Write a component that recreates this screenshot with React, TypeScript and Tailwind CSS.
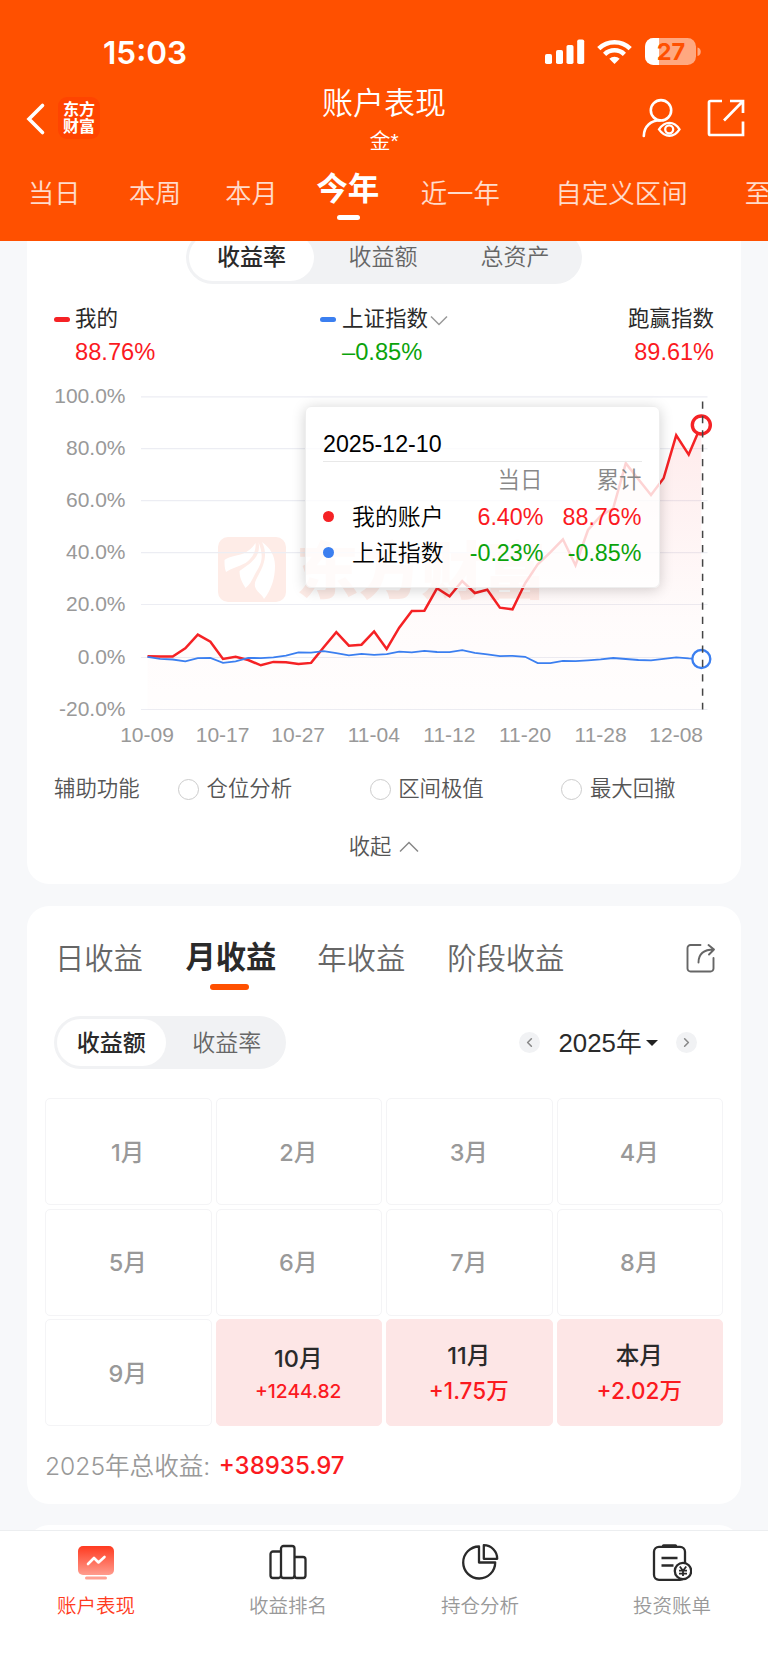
import { ChevronLeft, ChevronRight } from "lucide-react";
import clsx from "clsx";

const STEP = 12.587;
const START_X = 147.5;

// one value per trading day, in chart pixels
const mine = [
  656.3, 656.5, 656.5, 648.3, 634.6, 641.7, 659, 656.7, 660, 665.3, 661.9, 662.2, 664, 662.9, 647.3,
  632.2, 645.7, 644.7, 631.5, 649, 627.7, 611, 610.7, 588.3, 596.3, 581, 593, 589.7, 607.7, 609.3,
  583.3, 564.3, 552.3, 539.3, 565.3, 530, 516, 508.3, 463.2, 479.3, 495, 478.3, 435.3, 454.6, 425,
];
const index = [
  656.9, 658.8, 659.5, 661.3, 658.2, 658, 662.8, 661.3, 657.9, 658.1, 657.4, 655.6, 652.4, 652.7, 651.2,
  653.2, 655.3, 653.9, 654.8, 654.2, 651.7, 652.3, 650.9, 652, 652.1, 650.2, 652.8, 654.3, 656.2, 655.8,
  656.8, 663.1, 663.1, 660.8, 661.2, 660.4, 659.4, 658, 659, 660, 660.4, 658.8, 657.3, 658.3, 659,
];

const toPoints = (values: number[]) =>
  values.map((y, i) => `${(START_X + i * STEP).toFixed(1)},${y}`).join(" ");

const yTicks = [
  { label: "100.0%", y: 396.8 },
  { label: "80.0%", y: 448.7 },
  { label: "60.0%", y: 500.6 },
  { label: "40.0%", y: 552.6 },
  { label: "20.0%", y: 604.5 },
  { label: "0.0%", y: 657.5 },
  { label: "-20.0%", y: 709.5 },
];
const xTicks = ["10-09", "10-17", "10-27", "11-04", "11-12", "11-20", "11-28", "12-08"];

const months = [
  { name: "1月" },
  { name: "2月" },
  { name: "3月" },
  { name: "4月" },
  { name: "5月" },
  { name: "6月" },
  { name: "7月" },
  { name: "8月" },
  { name: "9月" },
  { name: "10月", value: "+1244.82", small: true },
  { name: "11月", value: "+1.75万" },
  { name: "本月", value: "+2.02万" },
];

function StatusBar() {
  return (
    <div className="flex h-[84px] items-center pt-[20px] text-white">
      <span className="mt-[2px] ml-[103px] w-[442px] font-['Inter'] text-[31.5px] leading-none font-semibold">15:03</span>
      <svg width="160" height="28" viewBox="545 38 160 28" fill="#fff">
        <rect x="545" y="54" width="7" height="10" rx="1.8" />
        <rect x="556" y="50" width="7" height="14" rx="1.8" />
        <rect x="566.5" y="45" width="7" height="19" rx="1.8" />
        <rect x="577.2" y="39.5" width="7" height="24.5" rx="1.8" />
        <g fill="none" stroke="#fff" strokeWidth="4.6">
          <path d="M598.8 48.6a22.5 22.5 0 0 1 31.4 0" />
          <path d="M604.6 54.3a14.3 14.3 0 0 1 19.8 0" />
        </g>
        <path d="M614.5 64l-5.2-5.3a7.6 7.6 0 0 1 10.4 0z" />
        <rect x="645" y="38" width="51" height="27" rx="8.5" fillOpacity="0.5" />
        <path d="M653.5 38H659V65H653.5A8.5 8.5 0 0 1 645 56.5V46.5A8.5 8.5 0 0 1 653.5 38z" />
        <path d="M697.5 47.5a4.4 4.4 0 0 1 0 8.5z" fillOpacity="0.5" />
        <text x="671" y="60.2" textAnchor="middle" fontSize="23.5" fontWeight="700" fill="#ff5000" className="font-['Inter']">27</text>
      </svg>
    </div>
  );
}

function Header() {
  return (
    <header className="relative z-10 h-[241px] shrink-0 overflow-hidden bg-[#ff5000] text-white">
      <StatusBar />
      <div className="flex h-[74px]">
        <div className="flex w-[254px] pl-[26px]">
          <svg className="mt-[18px]" width="20" height="34" viewBox="0 0 20 34" fill="none" stroke="#fff" strokeWidth="3.6" strokeLinecap="round">
            <path d="M16.5 3.5L3 17l13.5 13.5" strokeLinejoin="miter" />
          </svg>
          <div className="mt-[13px] ml-[12px] flex size-[42px] flex-col items-center justify-center rounded-[9px] bg-[#ff4400] text-[16px] leading-[17.5px] font-bold">
            <span>东方</span>
            <span>财富</span>
          </div>
        </div>
        <div className="flex w-[260px] flex-col items-center">
          <h1 className="mt-px text-[31px] leading-[38px] font-[350]">账户表现</h1>
          <p className="text-[21px] leading-[36px] font-[350]">金*</p>
        </div>
        <div className="flex flex-1 pl-[126px]">
          <svg width="110" height="50" viewBox="640 94 110 50" className="mt-[10px] shrink-0" fill="none" stroke="#fff" strokeWidth="2.6" strokeLinecap="round">
            <circle cx="661" cy="110.3" r="10.2" />
            <path d="M643.8 136c.3-10 7-15.5 16.5-15.7" />
            <path d="M659 129.3c6-8.6 15-8.6 20.5 0-5.5 8.6-14.5 8.6-20.5 0z" strokeWidth="2.3" />
            <circle cx="669.2" cy="129.3" r="4" strokeWidth="2.3" />
            <path d="M722 101h-11.5a1.5 1.5 0 0 0-1.5 1.5V133.5a1.5 1.5 0 0 0 1.5 1.5H743V121.5M743 113V101H730M743 101L724 120.5" strokeLinecap="butt" strokeWidth="2.7" />
          </svg>
        </div>
      </div>
      <nav className="flex h-[70px] items-center pt-[2px] pl-[28px] text-[26.2px] leading-none font-[350] whitespace-nowrap text-white/80">
        <span>当日</span>
        <span className="ml-[48.5px]">本周</span>
        <span className="ml-[44px]">本月</span>
        <span className="relative -mt-[9px] ml-[38.5px] text-[31.5px] font-bold text-white">
          今年
          <i className="absolute top-[41px] left-[20.5px] h-[5.5px] w-[23px] rounded-full bg-white" />
        </span>
        <span className="ml-[41.5px] text-[26.4px]">近一年</span>
        <span className="ml-[55.5px] text-[26.5px]">自定义区间</span>
        <span className="ml-[57px]">至</span>
      </nav>
    </header>
  );
}

function Tooltip() {
  const rows = [
    { name: "我的账户", dot: "bg-[#f52225]", day: "6.40%", total: "88.76%", color: "text-[#fb1a1f]" },
    { name: "上证指数", dot: "bg-[#3b7ff0]", day: "-0.23%", total: "-0.85%", color: "text-[#0ba30b]" },
  ];
  return (
    <div className="absolute top-[39px] left-[278px] h-[181.5px] w-[355px] rounded-[6px] border-[1.5px] border-[#eee] bg-white/80 pt-[19px] pr-[17.5px] pl-[17px] text-[23px] shadow-[0_2px_14px_rgba(0,0,0,0.18)]">
      <p className="h-[36px] border-b-[1.5px] border-[#e8e8e8] text-[23.2px] leading-[37px] text-black">2025-12-10</p>
      <div className="flex h-[38px] items-center justify-end text-[22.5px] leading-none font-[350] text-[#888]">
        <span className="mt-px">当日</span>
        <span className="mt-px ml-[54px]">累计</span>
      </div>
      {rows.map((row) => (
        <div key={row.name} className="flex h-[35.5px] items-center leading-none text-black">
          <i className={clsx("-mt-[2px] size-[11px] rounded-full", row.dot)} />
          <span className="ml-[18px] text-[22.9px] font-[350]">{row.name}</span>
          <span className={clsx("flex-1 text-right text-[23.3px]", row.color)}>{row.day}</span>
          <span className={clsx("w-[98px] text-right text-[23.3px]", row.color)}>{row.total}</span>
        </div>
      ))}
    </div>
  );
}

function Chart() {
  const endX = START_X + 44 * STEP;
  return (
    <div className="relative">
      <svg width="714" height="385" viewBox="27 367 714 385" className="block">
        <defs>
          <linearGradient id="area" x1="0" y1="0" x2="0" y2="1">
            <stop offset="0" stopColor="#f52225" stopOpacity="0.09" />
            <stop offset="0.7" stopColor="#f52225" stopOpacity="0.016" />
            <stop offset="1" stopColor="#f52225" stopOpacity="0.008" />
          </linearGradient>
        </defs>
        <g>
          <rect x="218" y="537" width="68" height="65" rx="10" fill="#feece7" />
          <g fill="#fff">
            <path d="M224.5 560c4-3 8-3.500 14-5 8-2 13-6 17-12 1 9-4 16-10 20-7 4-14 5-19.500 9-1.500-4-1.500-8-1.500-12z" />
            <path d="M258.500 542c3 14-7 21-19 29 0 7 3 12 6 17 4-3 6-7 9-13 5-9 11-15 4-33z" />
            <path d="M262 542c6 12 2 23-3 32-3 6-6 10-3 15 2 4 6 5 8 10 8-10 11-22 11-33 0-11-5-18-13-24z" />
          </g>
          <text x="296" y="593.5" fontSize="62.5" fontWeight="900" fill="#feece7">东方财富</text>
        </g>
        {yTicks.map((t) => (
          <g key={t.label}>
            <line x1="141" x2="707.5" y1={t.y} y2={t.y} stroke="#ecedf3" strokeWidth="1.2" />
            <text x="125.5" y={t.y + 6.3} textAnchor="end" fontSize="21" fill="#999">{t.label}</text>
          </g>
        ))}
        {xTicks.map((label, i) => (
          <text key={label} x={147 + i * 75.6} y="741.5" textAnchor="middle" fontSize="21" fill="#999">{label}</text>
        ))}
        <polygon points={`${START_X},709.5 ${toPoints(mine)} ${endX},709.5`} fill="url(#area)" />
        <polyline points={toPoints(mine)} fill="none" stroke="#f52225" strokeWidth="2.5" />
        <polyline points={toPoints(index)} fill="none" stroke="#3b7ff0" strokeWidth="1.8" />
        <circle cx={endX} cy="425" r="9" fill="#fff" stroke="#f52225" strokeWidth="3.4" />
        <circle cx={endX} cy="659" r="9" fill="#fff" stroke="#3b7ff0" strokeWidth="2.3" />
        <line x1="702.6" x2="702.6" y1="401.5" y2="709.5" stroke="#444" strokeWidth="1.5" strokeDasharray="7.3 7.05" />
      </svg>
      <Tooltip />
    </div>
  );
}

function PerformanceCard() {
  return (
    <section className="-mt-[10px] h-[653px] shrink-0 rounded-b-[22px] bg-white">
      <div className="mx-auto flex h-[53px] w-[396px] rounded-full bg-[#f1f2f4] p-[3px] text-[23px] leading-[46px] text-[#666]">
        <span className="h-[47px] w-[125px] rounded-full bg-white text-center font-medium text-[#2a2a2a]">收益率</span>
        <span className="ml-[6px] w-[126px] text-center font-[350]">收益额</span>
        <span className="ml-[6px] w-[126px] text-center font-[350]">总资产</span>
      </div>

      <div className="mt-[19px] flex justify-between pr-[27px] pl-[27px] text-[21.5px] leading-[32px] text-[#2a2a2a]">
        <div className="w-[266px]">
          <div className="flex items-center">
            <i className="mt-px mr-[5px] h-[5.5px] w-[16px] rounded-full bg-[#f52225]" />
            我的
          </div>
          <div className="mt-px pl-[21px] text-[23.7px] text-[#fb1a1f]">88.76%</div>
        </div>
        <div className="flex-1">
          <div className="flex items-center">
            <i className="mt-px mr-[6px] h-[5.5px] w-[16px] rounded-full bg-[#3b7ff0]" />
            上证指数
            <svg className="mt-[4px] ml-[2px]" width="18" height="12" viewBox="0 0 18 12" fill="none" stroke="#999" strokeWidth="1.5">
              <path d="M1 1.5l8 8 8-8" />
            </svg>
          </div>
          <div className="mt-px pl-[22px] text-[23.7px] text-[#0ba30b]">–0.85%</div>
        </div>
        <div className="text-right">
          <div>跑赢指数</div>
          <div className="mt-px text-[23.5px] text-[#fb1a1f]">89.61%</div>
        </div>
      </div>

      <div className="-mt-px">
        <Chart />
      </div>

      <div className="mt-[17px] flex h-[40px] items-center pl-[27px] text-[21.4px] leading-none font-[350] text-[#555]">
        <span className="mt-[2px] w-[124px] shrink-0">辅助功能</span>
        {["仓位分析", "区间极值", "最大回撤"].map((name) => (
          <span key={name} className="flex w-[191.7px] shrink-0 items-center">
            <i className="mr-[7.5px] size-[21px] shrink-0 rounded-full border-[1.5px] border-[#ccc]" />
            <span className="mt-[2px]">{name}</span>
          </span>
        ))}
      </div>
      <div className="mt-[18px] flex h-[40px] items-center justify-center text-[21.3px] leading-none font-[350] text-[#555]">
        <span className="mt-[2px]">收起</span>
        <svg className="ml-[8px]" width="20" height="12" viewBox="0 0 20 12" fill="none" stroke="#888" strokeWidth="1.5">
          <path d="M1 10.5l9-9 9 9" />
        </svg>
      </div>
    </section>
  );
}

function MonthlyCard() {
  return (
    <section className="mt-[21.5px] h-[598.5px] shrink-0 rounded-[22px] bg-white pt-[28px]">
      <div className="flex h-[50px] items-center pr-[25px] pl-[28px] text-[29.3px] leading-none font-[350] text-[#666]">
        <span>日收益</span>
        <span className="relative ml-[42.5px] text-[30.3px] font-bold text-[#2a2a2a]">
          月收益
          <i className="absolute top-[41px] left-[25px] h-[6px] w-[39px] rounded-full bg-[#ff5000]" />
        </span>
        <span className="ml-[41px]">年收益</span>
        <span className="ml-[42px]">阶段收益</span>
        <svg className="-mt-[2px] ml-auto" width="31" height="31" viewBox="0 0 31 31" fill="none" stroke="#666" strokeWidth="1.9" strokeLinecap="round" strokeLinejoin="round">
          <path d="M15.500 3H5.500A3 3 0 0 0 2.500 6V26.500a3 3 0 0 0 3 3H25.500A3 3 0 0 0 28.500 26.500V16" />
          <path d="M13.500 20.500C13.500 12 18 7.500 29 7.500M23.500 3L29 7.500l-5 5" />
        </svg>
      </div>

      <div className="mt-[32.5px] flex h-[53px] items-center pl-[27px]">
        <div className="flex h-[53px] w-[232px] rounded-full bg-[#f1f2f4] p-[3px] text-[23px] leading-[48px] text-[#666]">
          <span className="h-[47px] w-[109px] rounded-full bg-white text-center font-medium text-[#2a2a2a]">收益额</span>
          <span className="ml-[5px] w-[113px] text-center font-[350]">收益率</span>
        </div>
        <span className="ml-[232.5px] flex size-[21px] items-center justify-center rounded-full bg-[#f1f2f4]">
          <ChevronLeft size={15} color="#888" strokeWidth={2.5} />
        </span>
        <span className="mt-[2px] ml-[19px] w-[87px] text-[25.8px] leading-none font-[350] whitespace-nowrap text-[#2a2a2a]">2025年</span>
        <i className="border-x-[6px] border-t-[6px] border-x-transparent border-t-[#222]" />
        <span className="ml-[18px] flex size-[21px] items-center justify-center rounded-full bg-[#f1f2f4]">
          <ChevronRight size={15} color="#888" strokeWidth={2.5} />
        </span>
      </div>

      <div className="mx-[18px] mt-[29px] grid grid-cols-4 gap-x-[4px] gap-y-[3.7px] font-['Inter','Noto_Sans_CJK_SC',sans-serif]">
        {months.map((m) => (
          <div
            key={m.name}
            className={clsx(
              "flex h-[107px] flex-col items-center justify-center rounded-[5px] border pt-[2px] pr-px text-[23.5px] leading-[34px] font-medium",
              m.value ? "border-[#fde6e6] bg-[#fde6e6] text-[#2a2a2a]" : "border-[#f4f4f6] text-[#999]"
            )}
          >
            <span>{m.name}</span>
            {m.value && (
              <span className={clsx("text-[#fb1a1f]", m.small ? "text-[19.3px] leading-[30px]" : "text-[22.5px] leading-[35px]")}>
                {m.value}
              </span>
            )}
          </div>
        ))}
      </div>

      <p className="mt-[20px] ml-[18px] flex h-[40px] items-center font-['Inter','Noto_Sans_CJK_SC',sans-serif] text-[24.6px] leading-none font-[350] text-[#999]">
        2025年总收益:
        <span className="ml-[8.5px] text-[24px] font-medium text-[#fb1a1f]">+38935.97</span>
      </p>
    </section>
  );
}

function TabBar() {
  return (
    <nav className="relative z-10 grid h-[135px] shrink-0 grid-cols-4 border-t border-[#eceef0] bg-white text-[19.5px] leading-none font-[350] text-[#999]">
      <div className="flex flex-col items-center pt-[12px] text-[#ff3a20]">
        <svg width="40" height="40" viewBox="0 0 40 40">
          <defs>
            <linearGradient id="screen" x1="0" y1="0" x2="0" y2="1">
              <stop offset="0" stopColor="#ff3a20" />
              <stop offset="1" stopColor="#ff9c8e" />
            </linearGradient>
          </defs>
          <rect x="2" y="3" width="36" height="29" rx="5" fill="url(#screen)" />
          <rect x="9" y="33.5" width="22" height="3" rx="1.5" fill="#ffa093" />
          <path d="M12 21l6-6 4.5 4.500 6-5.500" fill="none" stroke="#fff" strokeWidth="2.6" strokeLinecap="round" strokeLinejoin="round" />
        </svg>
        <span className="mt-[14px]">账户表现</span>
      </div>
      <div className="flex flex-col items-center pt-[12px]">
        <svg width="40" height="40" viewBox="0 0 40 40" fill="none" stroke="#2a2a2a" strokeWidth="2.3">
          <path d="M13 8.500H5a2.500 2.500 0 0 0-2.500 2.500V32.500A2.500 2.500 0 0 0 5 35H10.500A2.500 2.500 0 0 0 13 32.500" />
          <rect x="13" y="3" width="13.5" height="32" rx="2.5" />
          <path d="M26.500 14h8.500a2.500 2.500 0 0 1 2.500 2.500V32.500A2.500 2.500 0 0 1 35 35H29A2.500 2.500 0 0 1 26.500 32.500" />
        </svg>
        <span className="mt-[14px]">收益排名</span>
      </div>
      <div className="flex flex-col items-center pt-[12px]">
        <svg width="40" height="40" viewBox="0 0 40 40" fill="none" stroke="#2a2a2a" strokeWidth="2.3" strokeLinejoin="round">
          <path d="M19 3.500A16 16 0 1 0 35.200 19.500H19z" />
          <path d="M23.800 2.200V15.800H37.200A13.400 13.400 0 0 0 23.800 2.200z" />
        </svg>
        <span className="mt-[14px]">持仓分析</span>
      </div>
      <div className="flex flex-col items-center pt-[12px]">
        <svg width="40" height="40" viewBox="0 0 40 40" fill="none" stroke="#2a2a2a" strokeWidth="2.3">
          <rect x="2" y="3.8" width="31" height="33" rx="5" />
          <path d="M11.500 2.800H23.500" strokeWidth="3.2" strokeLinecap="round" />
          <path d="M9.500 15h16M9.500 22.500h12" strokeWidth="2.5" />
          <circle cx="31" cy="28" r="8.2" fill="#fff" />
          <path d="M27.800 23.500L31 27.800l3.200-4.300M31 27.500V33M27 27.600h8M27 30.600h8" strokeWidth="1.8" />
        </svg>
        <span className="mt-[14px]">投资账单</span>
      </div>
    </nav>
  );
}

export default function App() {
  return (
    <div className="flex h-[1665px] w-[768px] flex-col overflow-hidden bg-[#f7f8fa] font-['Liberation_Sans','Noto_Sans_CJK_SC',sans-serif]">
      <Header />
      <main className="flex min-h-0 flex-1 flex-col overflow-hidden px-[27px]">
        <PerformanceCard />
        <MonthlyCard />
        <section className="mt-[21px] h-[60px] shrink-0 rounded-[22px] bg-white" />
      </main>
      <TabBar />
    </div>
  );
}
